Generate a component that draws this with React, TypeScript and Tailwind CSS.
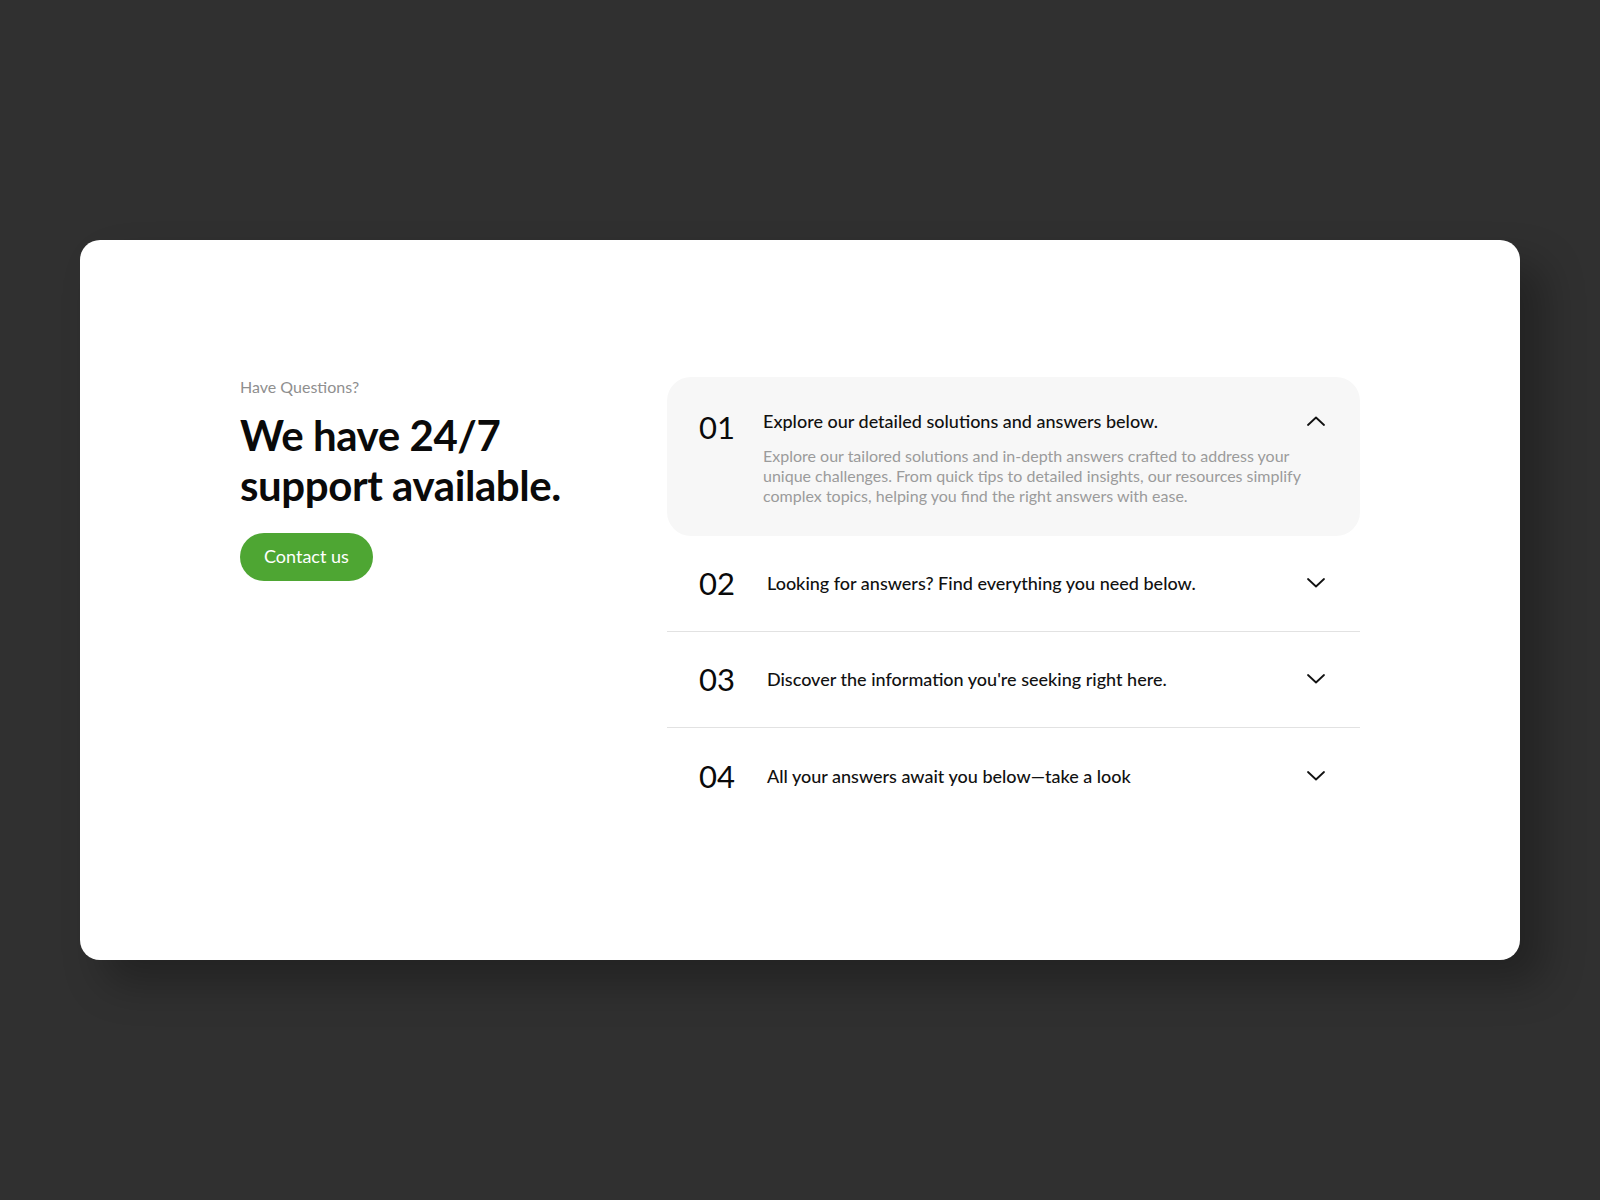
import { useState } from "react";

const faqs = [
  {
    n: "01",
    q: "Explore our detailed solutions and answers below.",
    a: "Explore our tailored solutions and in-depth answers crafted to address your unique challenges. From quick tips to detailed insights, our resources simplify complex topics, helping you find the right answers with ease.",
  },
  {
    n: "02",
    q: "Looking for answers? Find everything you need below.",
    a: "Browse our help articles, guides and walkthroughs to get unstuck quickly and keep moving forward.",
  },
  {
    n: "03",
    q: "Discover the information you're seeking right here.",
    a: "Everything from billing to onboarding is documented here, updated regularly by our support team.",
  },
  {
    n: "04",
    q: "All your answers await you below\u2014take a look",
    a: "Still can't find it? Reach out any time and a member of our team will get back to you.",
  },
];

function Chevron({ up }: { up: boolean }) {
  return (
    <svg width="18" height="10" viewBox="0 0 18 10" fill="none" className="shrink-0">
      <path
        d={up ? "M1 9L9 1.5L17 9" : "M1 1L9 8.5L17 1"}
        stroke="#111"
        strokeWidth="1.8"
        strokeLinecap="round"
        strokeLinejoin="round"
      />
    </svg>
  );
}

export default function App() {
  const [open, setOpen] = useState(0);

  return (
    <div className="flex min-h-screen items-center justify-center bg-[#303030] font-['Lato',sans-serif]">
      <div className="flex h-[720px] w-[1440px] items-center rounded-[20px] bg-white px-[160px] shadow-[24px_24px_40px_rgba(0,0,0,0.28)]">
        <div className="flex w-full items-start">
          {/* Left */}
          <div className="w-[427px] shrink-0">
            <div className="text-[16px] leading-5 text-[#8f8f8f]">Have Questions?</div>
            <h1 className="mt-[13px] text-[42px] font-bold leading-[50px] tracking-[-0.01em] text-[#0a0a0a]">
              We have 24/7
              <br />
              support available.
            </h1>
            <button className="mt-[23px] h-12 rounded-full bg-[#4ea633] px-6 text-[18px] text-white">
              Contact us
            </button>
          </div>

          {/* Right */}
          <div className="flex-1">
            {faqs.map((f, i) => {
              const isOpen = open === i;
              const showBorder = i > 0 && i < faqs.length - 1 && open !== i + 1;
              if (isOpen) {
                return (
                  <div
                    key={f.n}
                    onClick={() => setOpen(-1)}
                    className="grid cursor-pointer grid-cols-[64px_1fr_21px] items-start rounded-[24px] bg-[#f7f7f7] px-8 pb-[30px] pt-8"
                  >
                    <span className="text-[31px] leading-9 text-[#0a0a0a]">{f.n}</span>
                    <div className="text-[18px] font-medium leading-6 text-[#111]">{f.q}</div>
                    <span className="mt-[7px]">
                      <Chevron up />
                    </span>
                    <p className="col-span-2 col-start-2 mt-px max-w-[550px] text-[16px] leading-5 text-[#9b9b9b]">
                      {f.a}
                    </p>
                  </div>
                );
              }
              return (
                <button
                  key={f.n}
                  onClick={() => setOpen(i)}
                  className={
                    "flex h-24 w-full items-center px-8 text-left " +
                    (showBorder ? "border-b border-[#e2e2e2]" : "")
                  }
                >
                  <span className="mr-8 text-[31px] leading-9 text-[#0a0a0a]">{f.n}</span>
                  <span className="flex-1 text-[18px] font-medium leading-6 text-[#111]">{f.q}</span>
                  <span className="mr-[3px]">
                    <Chevron up={false} />
                  </span>
                </button>
              );
            })}
          </div>
        </div>
      </div>
    </div>
  );
}
